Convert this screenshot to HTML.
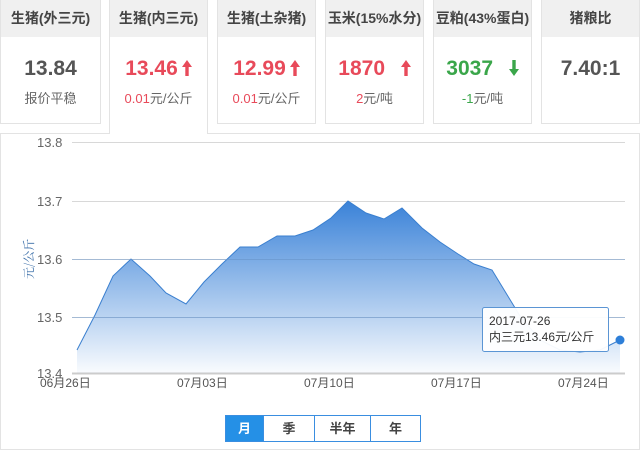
<!DOCTYPE html>
<html><head><meta charset="utf-8"><style>
body{margin:0;width:643px;height:452px;background:#fff;font-family:"Liberation Sans","Noto Sans CJK SC",sans-serif;position:relative;overflow:hidden}
.card{position:absolute;top:0;width:97px;height:124px;border:1px solid #e3e3e3;border-top:none;box-sizing:border-box;background:#fff;text-align:center}
.card .h{height:37px;background:#f0f0f0;line-height:37px;font-size:14px;color:#444;font-weight:bold}
.card .v{font-size:21px;font-weight:bold;color:#555;margin-top:19px;line-height:26px}
.card .s{font-size:13px;color:#666;margin-top:6px}
.r{color:#e84a5a!important}.g{color:#3aa64a!important}
.act{height:134px;border-bottom:none;z-index:2}
.panel{position:absolute;left:0;top:133px;width:640px;height:317px;border:1px solid #e3e3e3;box-sizing:border-box}
.btns{position:absolute;left:225px;top:415px;display:flex;border:1px solid #3a8ee0;height:25px}
.btns div{font-size:13px;font-weight:bold;color:#444;line-height:25px;text-align:center;border-left:1px solid #3a8ee0}
.ar{display:inline-block;vertical-align:-1px;margin-left:4px}
</style></head><body>
<div class="panel"></div>
<div class="card" style="left:0;width:101px"><div class="h">生猪(外三元)</div><div class="v">13.84</div><div class="s">报价平稳</div></div>
<div class="card act" style="left:109px;width:99px"><div class="h">生猪(内三元)</div><div class="v r">13.46<svg class="ar" width="10" height="16" viewBox="0 0 10 16"><path d="M5 0L10 7H6.7V16H3.3V7H0Z" fill="#e84a5a"/></svg></div><div class="s"><span class="r">0.01</span>元/公斤</div></div>
<div class="card" style="left:217px;width:99px"><div class="h">生猪(土杂猪)</div><div class="v r">12.99<svg class="ar" width="10" height="16" viewBox="0 0 10 16"><path d="M5 0L10 7H6.7V16H3.3V7H0Z" fill="#e84a5a"/></svg></div><div class="s"><span class="r">0.01</span>元/公斤</div></div>
<div class="card" style="left:325px;width:99px"><div class="h">玉米(15%水分)</div><div class="v r">1870 &nbsp;<svg class="ar" width="10" height="16" viewBox="0 0 10 16"><path d="M5 0L10 7H6.7V16H3.3V7H0Z" fill="#e84a5a"/></svg></div><div class="s"><span class="r">2</span>元/吨</div></div>
<div class="card" style="left:433px;width:99px"><div class="h">豆粕(43%蛋白)</div><div class="v g">3037 &nbsp;<svg class="ar" width="10" height="16" viewBox="0 0 10 16"><path d="M5 16L10 9H6.7V0H3.3V9H0Z" fill="#3aa64a"/></svg></div><div class="s"><span class="g">-1</span>元/吨</div></div>
<div class="card" style="left:541px;width:99px"><div class="h">猪粮比</div><div class="v">7.40:1</div></div>
<svg style="position:absolute;left:0;top:0" width="643" height="452">
<defs><linearGradient id="gr" x1="0" y1="0" x2="0" y2="1"><stop offset="0" stop-color="#3a82d8"/><stop offset="1" stop-color="#3a82d8" stop-opacity="0.03"/></linearGradient></defs>
<g stroke="#d8d8d8" stroke-width="1">
<line x1="72" y1="142.5" x2="625" y2="142.5"/><line x1="72" y1="201.5" x2="625" y2="201.5"/><line x1="72" y1="259.5" x2="625" y2="259.5"/><line x1="72" y1="317.5" x2="625" y2="317.5"/><line x1="72" y1="373.5" x2="625" y2="373.5" stroke="#ccc" stroke-width="2"/>
</g>
<path d="M77,350 L95,315 L113,276 L131,259 L150,276 L166,293 L186,304 L204,282 L222,264 L240,247 L258,247 L277,236 L295,236 L313,230 L331,218 L348,201 L366,213 L384,219 L402,208 L422,228 L440,242 L458,254 L474,264 L492,270 L520,316 L540,340 L560,350 L580,352 L600,350 L620,340 L620,373 L77,373 Z" fill="url(#gr)" stroke="none"/>
<path d="M77,350 L95,315 L113,276 L131,259 L150,276 L166,293 L186,304 L204,282 L222,264 L240,247 L258,247 L277,236 L295,236 L313,230 L331,218 L348,201 L366,213 L384,219 L402,208 L422,228 L440,242 L458,254 L474,264 L492,270 L520,316 L540,340 L560,350 L580,352 L600,350 L620,340" fill="none" stroke="#3a7fcf" stroke-width="1"/>
<line x1="72" y1="259.5" x2="625" y2="259.5" stroke="#6f9bd0" stroke-opacity=".5"/><line x1="72" y1="317.5" x2="625" y2="317.5" stroke="#6f9bd0" stroke-opacity=".5"/>
<circle cx="620" cy="340" r="4.5" fill="#2e7fd8"/>
<g font-size="13" fill="#666" font-family="Liberation Sans,sans-serif">
<text x="37" y="147">13.8</text><text x="37" y="206">13.7</text><text x="37" y="264">13.6</text><text x="37" y="322">13.5</text><text x="37" y="378">13.4</text>
</g>
<g font-size="12" fill="#555" font-family="Liberation Sans,Noto Sans CJK SC,sans-serif">
<text x="40" y="387">06月26日</text><text x="177" y="387">07月03日</text><text x="304" y="387">07月10日</text><text x="431" y="387">07月17日</text><text x="558" y="387">07月24日</text>
</g>
<text transform="translate(33,279) rotate(-90)" font-size="12" fill="#3a6ea8" font-family="Noto Serif CJK SC,serif">元/公斤</text>
<rect x="482.5" y="307.5" width="126" height="44" rx="2" fill="#fff" fill-opacity=".95" stroke="#5b95d4"/>
<text x="489" y="325" font-size="12" fill="#333" font-family="Liberation Sans,sans-serif">2017-07-26</text>
<text x="489" y="341" font-size="12" fill="#333" font-family="Liberation Sans,Noto Sans CJK SC,sans-serif">内三元13.46元/公斤</text>
</svg>
<div class="btns"><div style="width:37px;background:#2590e6;color:#fff;border-left:none">月</div><div style="width:50px">季</div><div style="width:55px">半年</div><div style="width:49px">年</div></div>
</body></html>
